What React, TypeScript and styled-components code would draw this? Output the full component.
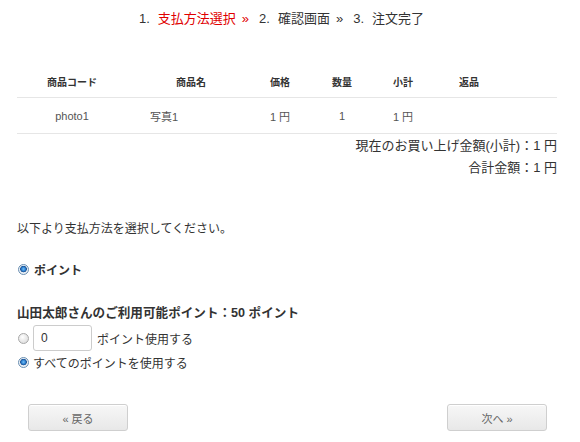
import styled, { createGlobalStyle } from "styled-components";

const GlobalStyle = createGlobalStyle`
  body {
    margin: 0;
    background: #fff;
    font-family: "Liberation Sans", Arial, "Noto Sans CJK JP", sans-serif;
    color: #333;
  }
`;

const Page = styled.div`
  width: 580px;
  box-sizing: border-box;
  padding: 0 23px 0 17px;
`;

const Steps = styled.div`
  display: flex;
  justify-content: center;
  align-items: center;
  gap: 10px;
  height: 20px;
  padding: 7px 0 0;
  margin-right: 11px;
  font-size: 13px;
  color: #333;
`;

const Step = styled.span<{ $active?: boolean }>`
  color: ${(p) => (p.$active ? "#e00000" : "#333")};
  white-space: nowrap;
`;

const StepNum = styled.span`
  margin-right: 8px;
  color: #333;
`;

const Arrow = styled.span`
  margin-left: 6px;
`;

const Table = styled.div`
  margin-top: 39px;
  display: grid;
  grid-template-columns: 110px 128px 50px 74px 48px 84px 1fr;
`;

const HeadCell = styled.div`
  height: 31px;
  display: flex;
  align-items: center;
  justify-content: center;
  font-size: 10px;
  font-weight: bold;
  color: #333;
  border-bottom: 1px solid #e6e6e6;
`;

const Cell = styled.div<{ $left?: boolean }>`
  height: 35px;
  display: flex;
  align-items: center;
  justify-content: ${(p) => (p.$left ? "flex-start" : "center")};
  padding-left: ${(p) => (p.$left ? "23px" : "0")};
  font-size: 11px;
  color: #555;
  border-bottom: 1px solid #e6e6e6;
`;

const Totals = styled.div`
  display: flex;
  flex-direction: column;
  align-items: flex-end;
  padding-top: 1px;
  font-size: 13px;
  line-height: 22px;
  color: #333;
`;

const Instruction = styled.p`
  margin: 41px 0 0;
  font-size: 12px;
  line-height: 18px;
  color: #333;
`;

const Method = styled.label`
  display: flex;
  align-items: center;
  gap: 5px;
  margin-top: 23px;
  font-size: 12px;
  font-weight: bold;
  color: #333;
`;

const PointsTitle = styled.div`
  margin-top: 26px;
  font-size: 12.6px;
  font-weight: bold;
  line-height: 18px;
  color: #333;
`;

const OptionRow = styled.label`
  display: flex;
  align-items: center;
  gap: 4px;
  font-size: 12px;
  color: #333;
  height: 24px;
`;

const Radio = styled.span<{ $checked?: boolean }>`
  width: 11px;
  height: 11px;
  border-radius: 50%;
  box-sizing: border-box;
  border: 1px solid ${(p) => (p.$checked ? "#6a8fb2" : "#a8a8a8")};
  background: ${(p) =>
    p.$checked
      ? "radial-gradient(circle at 50% 45%, #7cc2f5 0, #2a7fd0 2px, #1c4f8f 3px, #e8eef5 3.6px, #f4f4f4 100%)"
      : "radial-gradient(circle at 40% 35%, #ffffff 0, #eeeeee 3px, #d6d6d6 100%)"};
  margin-left: 1px;
  flex-shrink: 0;
`;

const PointInput = styled.input`
  width: 59px;
  height: 26px;
  box-sizing: border-box;
  border: 1px solid #cccccc;
  border-radius: 3px;
  padding: 0 7px;
  font-size: 12px;
  font-family: inherit;
  color: #333;
  margin-right: 1px;
`;

const Options = styled.div`
  margin-top: 4px;
  display: flex;
  flex-direction: column;
`;

const Buttons = styled.div`
  display: flex;
  justify-content: space-between;
  margin-top: 30px;
  padding: 0 10px 0 11px;
`;

const Button = styled.button`
  width: 100px;
  height: 27px;
  border: 1px solid #cfcfcf;
  border-radius: 3px;
  background: linear-gradient(#f7f7f7, #e8e8e8);
  box-shadow: inset 0 1px 0 #fff;
  font-family: inherit;
  font-size: 11px;
  color: #666;
  cursor: pointer;
`;

const headers = ["商品コード", "商品名", "価格", "数量", "小計", "返品", ""];

export default function App() {
  return (
    <>
      <GlobalStyle />
      <Page>
        <Steps>
          <Step $active>
            <StepNum>1.</StepNum>支払方法選択<Arrow>»</Arrow>
          </Step>
          <Step>
            <StepNum>2.</StepNum>確認画面<Arrow>»</Arrow>
          </Step>
          <Step>
            <StepNum>3.</StepNum>注文完了
          </Step>
        </Steps>

        <Table>
          {headers.map((h, i) => (
            <HeadCell key={i}>{h}</HeadCell>
          ))}
          <Cell>photo1</Cell>
          <Cell $left>写真1</Cell>
          <Cell>1 円</Cell>
          <Cell>1</Cell>
          <Cell>1 円</Cell>
          <Cell />
          <Cell />
        </Table>

        <Totals>
          <div>現在のお買い上げ金額(小計)：1 円</div>
          <div>合計金額：1 円</div>
        </Totals>

        <Instruction>以下より支払方法を選択してください。</Instruction>

        <Method>
          <Radio $checked />
          ポイント
        </Method>

        <PointsTitle>山田太郎さんのご利用可能ポイント：50 ポイント</PointsTitle>
        <Options>
          <OptionRow>
            <Radio />
            <PointInput defaultValue="0" />
            ポイント使用する
          </OptionRow>
          <OptionRow>
            <Radio $checked />
            すべてのポイントを使用する
          </OptionRow>
        </Options>

        <Buttons>
          <Button>« 戻る</Button>
          <Button>次へ »</Button>
        </Buttons>
      </Page>
    </>
  );
}
